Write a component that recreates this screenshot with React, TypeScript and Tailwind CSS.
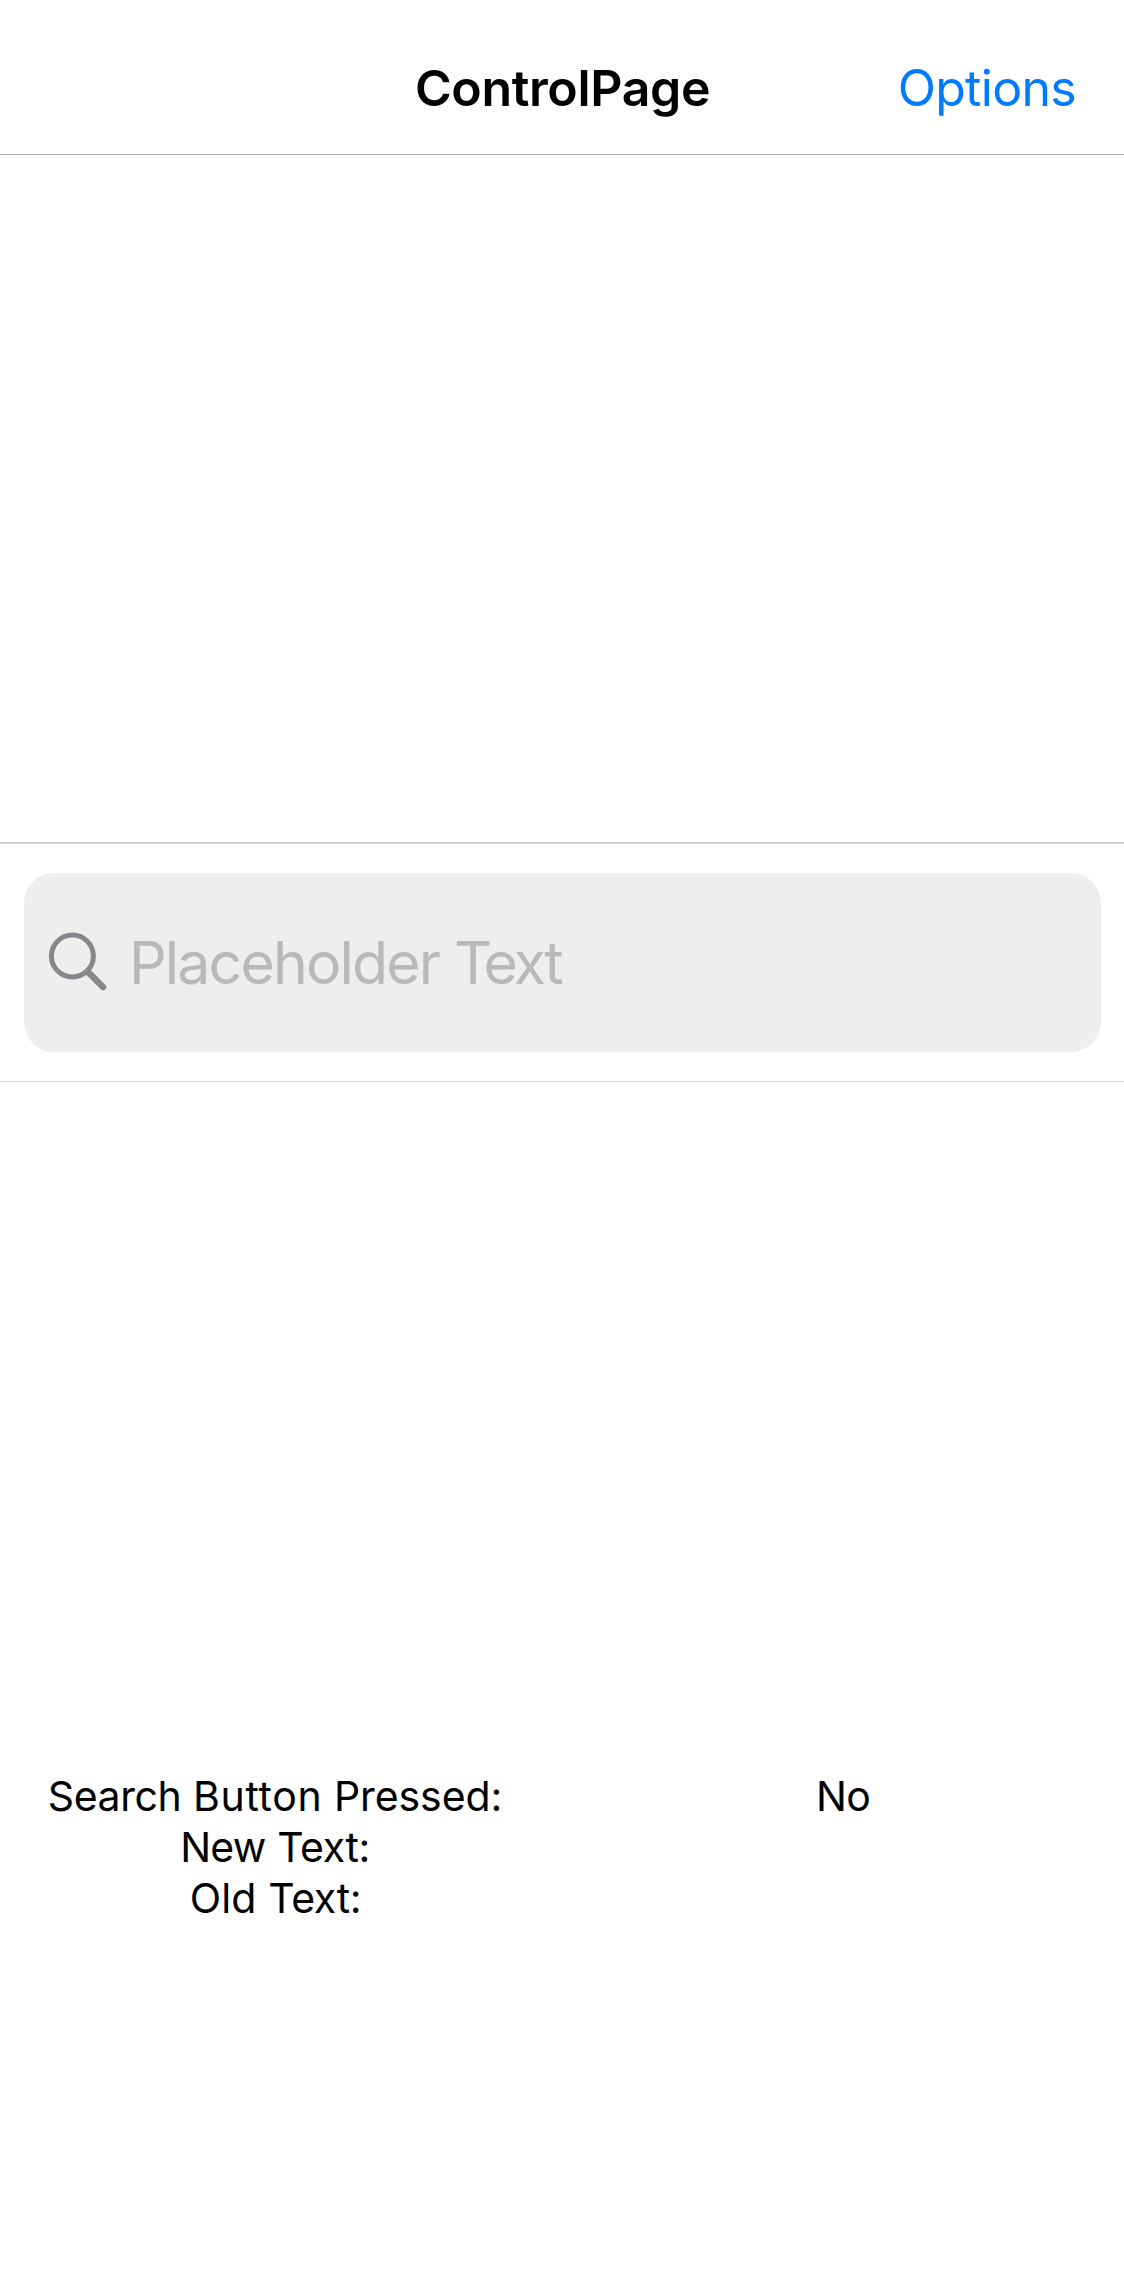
export default function App() {
  return (
    <main className="flex h-[2286px] w-[1124px] flex-col bg-white font-['Inter',sans-serif] text-black">
      <header className="grid h-[155px] grid-cols-[1fr_auto_1fr] items-center border-b border-[#b2b2b2] pt-[22px]">
        <span />
        <h1 className="pl-[1px] text-[50px] leading-[60px] font-semibold tracking-[-0.36px]">ControlPage</h1>
        <button className="justify-self-end pr-12 text-[50px] leading-[60px] tracking-[-0.7px] text-[#007aff]">Options</button>
      </header>
      <section className="mt-[687px] h-[240px] border-t-2 border-b border-t-[#d1d1d1] border-b-[#dedede] px-6 pt-[28.5px]">
        <div className="flex h-[179.5px] w-[1077px] items-center rounded-[30px] bg-[#eeeeee] pl-[24px]">
          <svg className="h-[60px] w-[60px]" viewBox="0 0 60 60" fill="none" stroke="#86868b">
            <circle cx="24.4" cy="24" r="21" strokeWidth="5" />
            <path d="M40 40L55 55" strokeWidth="6.5" strokeLinecap="round" />
          </svg>
          <span className="ml-[21px] text-[59px] leading-[71px] tracking-[-1.85px] text-[#b9b9bb]">
            Placeholder <span className="tracking-[-8.5px]">T</span><span className="tracking-[-2.8px]">ext</span>
          </span>
        </div>
      </section>
      <section className="mt-[689px] grid grid-cols-2 text-center text-[41px] leading-[51px]">
        <p className="pr-[12px]">
          <span className="tracking-[-0.4px]">Search</span> <span className="tracking-[0.7px]">Button</span> <span className="tracking-[-0.1px]">Pressed:</span>
        </p>
        <p className="tracking-[-0.8px]">No</p>
        <p className="pr-[12px]">
          <span className="tracking-[-0.7px]">New</span> <span className="tracking-[-0.4px]">Text:</span>
        </p>
        <p />
        <p className="pr-[11px]">
          <span className="tracking-[0.2px]">Old</span> <span className="tracking-[-0.3px]">Text:</span>
        </p>
        <p />
      </section>
    </main>
  );
}
